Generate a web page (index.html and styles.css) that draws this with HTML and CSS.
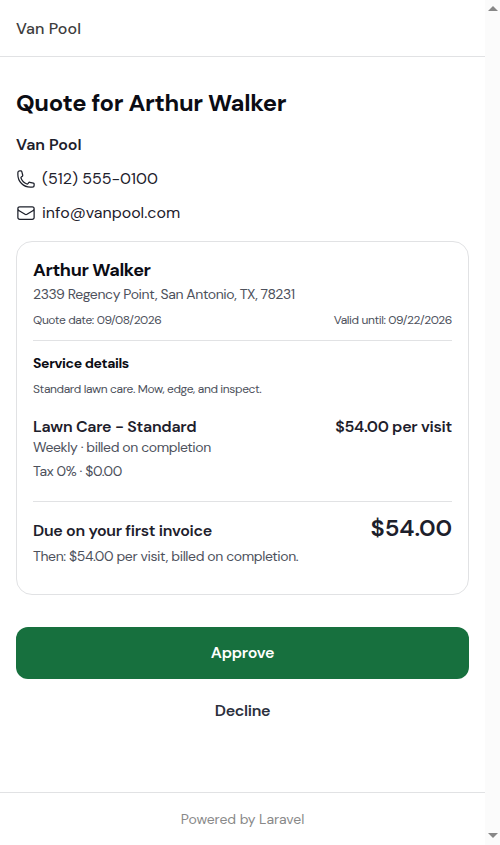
FILE: index.html
```html
<!DOCTYPE html>
<html lang="en">
<head>
<meta charset="utf-8">
<title>Quote for Arthur Walker</title>
<link rel="stylesheet" href="styles.css">
</head>
<body>
<div class="page">
  <header class="topbar"><span class="brand">Van Pool</span></header>
  <main class="content">
    <h1 class="title"><span>Quote for Arthur Walker</span></h1>
    <div class="company"><span>Van Pool</span></div>
    <div class="contact phone">
      <svg class="icon" viewBox="0 0 24 24"><path d="M2.25 6.75c0 8.284 6.716 15 15 15h2.25a2.25 2.25 0 0 0 2.25-2.25v-1.372c0-.516-.351-.966-.852-1.091l-4.423-1.106c-.44-.11-.902.055-1.173.417l-.97 1.293c-.282.376-.769.542-1.21.38a12.035 12.035 0 0 1-7.143-7.143c-.162-.441.004-.928.38-1.21l1.293-.97c.363-.271.527-.734.417-1.173L6.963 3.102a1.125 1.125 0 0 0-1.091-.852H4.5A2.25 2.25 0 0 0 2.25 4.5v2.25Z"/></svg>
      <span>(512) 555-0100</span>
    </div>
    <div class="contact email">
      <svg class="icon" viewBox="0 0 24 24"><path d="M21.75 6.75v10.5a2.25 2.25 0 0 1-2.25 2.25h-15a2.25 2.25 0 0 1-2.25-2.25V6.75m19.5 0A2.25 2.25 0 0 0 19.5 4.5h-15a2.25 2.25 0 0 0-2.25 2.25m19.5 0v.243a2.25 2.25 0 0 1-1.07 1.916l-7.5 4.615a2.25 2.25 0 0 1-2.36 0L3.32 8.91a2.25 2.25 0 0 1-1.07-1.916V6.75"/></svg>
      <span>info@vanpool.com</span>
    </div>
    <section class="card">
      <h2 class="customer"><span>Arthur Walker</span></h2>
      <div class="address"><span>2339 Regency Point, San Antonio, TX, 78231</span></div>
      <div class="dates"><span class="issued">Quote date: 09/08/2026</span><span class="valid">Valid until: 09/22/2026</span></div>
      <h3 class="details"><span>Service details</span></h3>
      <div class="summary"><span>Standard lawn care. Mow, edge, and inspect.</span></div>
      <div class="row"><span class="item">Lawn Care - Standard</span><span class="price">$54.00 per visit</span></div>
      <div class="schedule"><span>Weekly · billed on completion</span></div>
      <div class="tax"><span>Tax 0% · $0.00</span></div>
      <div class="total"><span class="due">Due on your first invoice</span><span class="amount">$54.00</span></div>
      <div class="then"><span>Then: $54.00 per visit, billed on completion.</span></div>
    </section>
    <button class="approve"><span>Approve</span></button>
    <button class="decline"><span>Decline</span></button>
  </main>
  <footer class="footer"><span>Powered by Laravel</span></footer>
</div>
<div class="scrollbar"><i class="arrow up"></i><i class="arrow down"></i></div>
</body>
</html>
```
FILE: styles.css
```css
* { box-sizing: border-box; }
body {
  margin: 0;
  height: 845px;
  display: flex;
  overflow: hidden;
  background: #fff;
  color: #1d202b;
  font-family: "DM Sans", Inter, "Liberation Sans", sans-serif;
  font-size: 16px;
}
h1, h2, h3 { margin: 0; }
.page { width: 485px; display: flex; flex-direction: column; }
.topbar { height: 57px; padding: 0 16px; line-height: 57px; border-bottom: 1px solid #e1e2e4; color: #3d3d3d; }
.brand { font-weight: 500; letter-spacing: 0.1px; }
.content { height: 735px; padding: 30px 16px 0; }
.title { height: 32px; font-size: 23.8px; line-height: 32px; font-weight: 700; color: #0b0c14; letter-spacing: -0.3px; }
.company { margin-top: 14px; height: 24px; line-height: 24px; font-weight: 600; letter-spacing: 0; }
.contact { height: 24px; line-height: 24px; margin-top: 10px; display: flex; align-items: center; gap: 6px; }
.icon { width: 20px; height: 20px; fill: none; stroke: #1d202b; stroke-width: 1.5; stroke-linecap: round; stroke-linejoin: round; }
.phone, .email { letter-spacing: 0; }
.card { margin-top: 16px; height: 354px; padding: 15px 16px 0; border: 1px solid #e1e2e4; border-radius: 16px; color: #4d515c; }
.customer { height: 26px; line-height: 26px; font-size: 18px; font-weight: 700; color: #0b0c14; letter-spacing: -0.35px; }
.address { height: 22px; line-height: 22px; font-size: 14px; letter-spacing: -0.4px; }
.dates { margin-top: 6px; height: 30px; line-height: 18px; font-size: 12px; border-bottom: 1px solid #e1e2e4; display: flex; justify-content: space-between; }
.issued, .valid { letter-spacing: -0.4px; }
.details { margin-top: 11px; height: 22px; line-height: 22px; font-size: 14px; font-weight: 700; color: #0b0c14; letter-spacing: -0.36px; }
.summary { margin-top: 6px; height: 18px; line-height: 18px; font-size: 12px; letter-spacing: -0.38px; }
.row { margin-top: 17px; height: 24px; line-height: 24px; display: flex; justify-content: space-between; font-weight: 600; color: #1d202b; }
.item { letter-spacing: -0.28px; }
.price { letter-spacing: -0.29px; }
.schedule { margin-top: -1px; height: 18px; line-height: 18px; font-size: 14px; letter-spacing: -0.4px; }
.tax { margin-top: 5px; height: 41px; line-height: 21px; font-size: 14px; border-bottom: 1px solid #e1e2e4; letter-spacing: -0.4px; }
.total { margin-top: 10px; height: 32px; line-height: 32px; display: flex; align-items: center; justify-content: space-between; color: #1d202b; font-weight: 600; }
.due { padding-top: 6px; letter-spacing: -0.29px; }
.amount { font-size: 23.8px; letter-spacing: -0.1px; }
.then { margin-top: 2px; height: 20px; line-height: 20px; font-size: 14px; letter-spacing: -0.4px; }
.approve, .decline { display: block; width: 100%; border: 0; padding: 0; font: 600 16px "DM Sans", Inter, sans-serif; }
.approve { margin-top: 32px; height: 52px; line-height: 52px; border-radius: 12px; background: #17703e; color: #fff; letter-spacing: -0.25px; }
.decline { margin-top: 8px; height: 48px; line-height: 48px; background: none; color: #2c303d; letter-spacing: -0.32px; }
.footer { height: 53px; line-height: 52px; border-top: 1px solid #e1e2e4; text-align: center; font-size: 14px; color: #898989; letter-spacing: -0.08px; }
.scrollbar { width: 15px; background: #fbfbfb; display: flex; flex-direction: column; justify-content: space-between; align-items: center; padding: 6px 0 7px; }
.arrow { width: 0; height: 0; border: 5px solid transparent; }
.up { border-top: 0; border-bottom-color: #878787; }
.down { border-bottom: 0; border-top-color: #878787; }
```
